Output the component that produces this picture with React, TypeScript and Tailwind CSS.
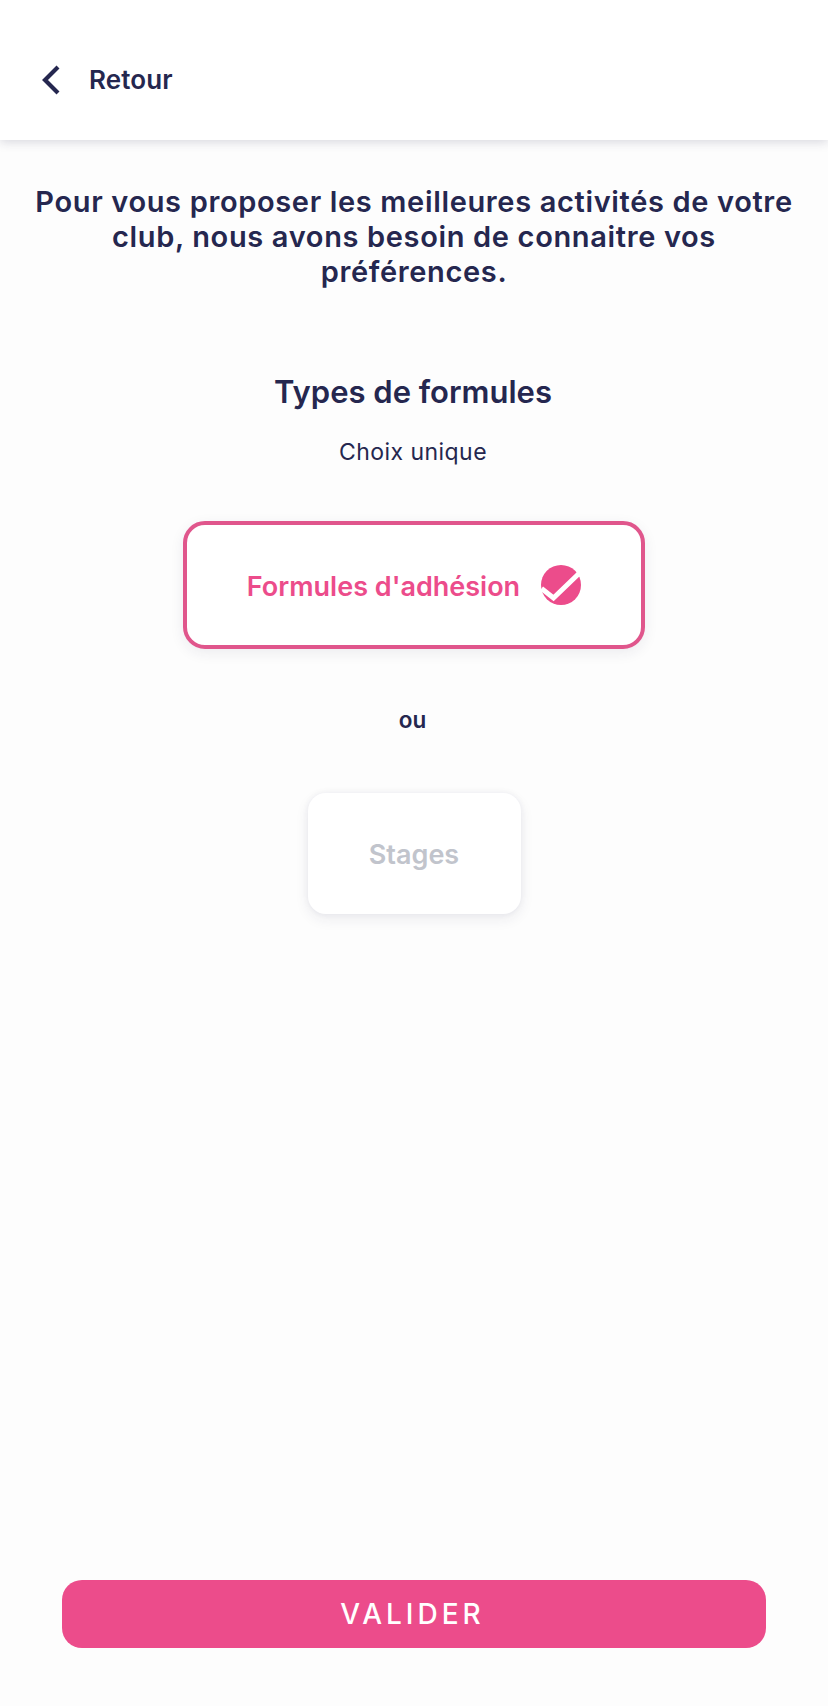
import React from 'react';

const CheckBadge = () => (
  <svg width="42" height="42" viewBox="0 0 42 42" className="shrink-0">
    <circle cx="21" cy="21" r="20" fill="#EC4C8B" />
    <path d="M1.5 24.5 L13.5 34 L39.5 9" fill="none" stroke="#ffffff" strokeWidth="5" />
  </svg>
);

export default function App() {
  return (
    <div className="w-[828px] h-[1706px] flex flex-col bg-[#fdfdfd] text-[#25274F] font-['Inter',sans-serif] overflow-hidden">
      {/* Header */}
      <div className="h-[140px] shrink-0 bg-white flex items-center pl-[41px] gap-[28px] pt-[19px] shadow-[0_2px_10px_rgba(37,39,79,0.18)] z-10">
        <svg width="20" height="30" viewBox="0 0 20 30" fill="none">
          <path d="M17 2 L4 15 L17 28" stroke="#25274F" strokeWidth="4.2" />
        </svg>
        <span className="text-[26px] font-semibold leading-[30px] tracking-[0.1px]">Retour</span>
      </div>

      <div className="flex-1 flex flex-col items-center">
        <p className="mt-[44px] w-[780px] text-center text-[29px] font-semibold leading-[35px] tracking-[0.65px]">
          Pour vous proposer les meilleures activités de votre club, nous avons besoin de connaitre vos préférences.
        </p>

        <h2 className="mt-[83px] text-[31px] font-semibold leading-[40px] pr-[2px]">Types de formules</h2>
        <p className="mt-[25px] text-[23px] leading-[30px] tracking-[0.45px] pr-[2px]">Choix unique</p>

        <button className="mt-[54px] w-[462px] h-[128px] rounded-[22px] border-[4px] border-[#E0568C] bg-white flex items-center justify-center gap-[20px] pl-[1px] shadow-[0_4px_14px_rgba(37,39,79,0.08)]">
          <span className="mt-[4px] text-[27px] font-semibold text-[#EC4C8B]">Formules d'adhésion</span>
          <CheckBadge />
        </button>

        <p className="mt-[56px] text-[22.5px] font-semibold leading-[30px] pr-[3px]">ou</p>

        <button className="mt-[58px] w-[213px] h-[121px] rounded-[18px] bg-white flex items-center justify-center shadow-[0_0_6px_rgba(37,39,79,0.06),0_5px_14px_rgba(37,39,79,0.08)]">
          <span className="mt-[4px] text-[27px] font-semibold text-[#C1C4CC]">Stages</span>
        </button>
      </div>

      <div className="shrink-0 px-[62px] pb-[58px]">
        <button className="w-full h-[68px] rounded-[20px] bg-[#EC4C8B] text-white text-[28px] font-medium tracking-[4px] pr-[3px]">VALIDER</button>
      </div>
    </div>
  );
}
